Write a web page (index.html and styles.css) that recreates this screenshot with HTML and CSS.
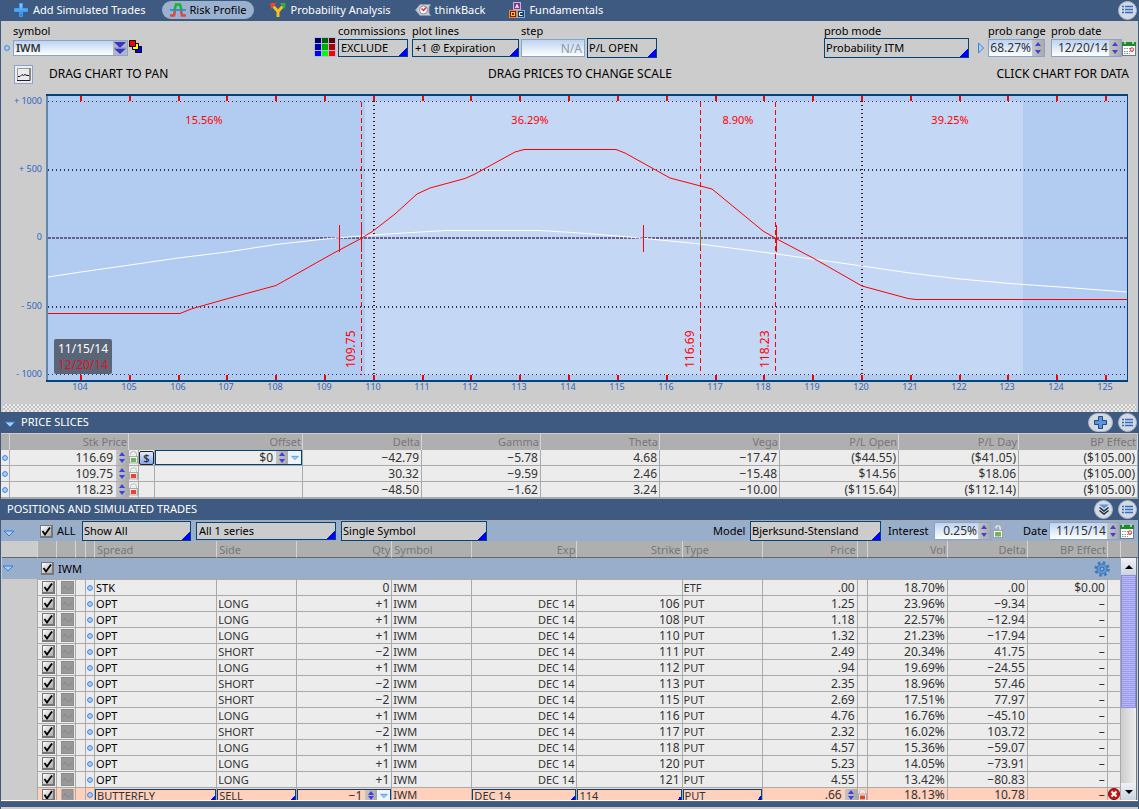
FILE: index.html
```html
<!DOCTYPE html>
<html lang="en">
<head>
<meta charset="utf-8">
<title>Risk Profile</title>
<link rel="stylesheet" href="styles.css">
</head>
<body>
<svg class="defs" aria-hidden="true">
  <defs>
    <linearGradient id="gBlue" x1="0" y1="0" x2="0" y2="1"><stop offset="0" stop-color="#8fd0ff"/><stop offset="1" stop-color="#1e7be0"/></linearGradient>
    <symbol id="i-list" viewBox="0 0 12 12"><path d="M0 2.500h2M0 5.500h2M0 8.500h2M3 2.500h8M3 5.500h8M3 8.500h8" stroke="#2f6fc4" stroke-width="1.4"/></symbol>
    <symbol id="i-plus" viewBox="0 0 16 16"><path d="M5.500 1.500h4v4h4v4h-4v4h-4v-4h-4v-4h4z" fill="#5b95dc" stroke="#1f4a80"/></symbol>
    <symbol id="i-chev" viewBox="0 0 12 12"><path d="M1 .5h10L6 4.500z" fill="#5b95dc"/><path d="M1.500 3.500 6 7l4.500-3.500M1.500 6.500 6 10l4.500-3.500" fill="none" stroke="#1a2a3a" stroke-width="1.4"/></symbol>
    <symbol id="i-down" viewBox="0 0 12 7"><path d="M1 1h10L6 6z" fill="#9fd0ff" stroke="#3a7bd0"/></symbol>
    <symbol id="i-up3" viewBox="0 0 6 4"><path d="M0 4 3 0l3 4z" fill="#4040e0"/></symbol>
    <symbol id="i-dn3" viewBox="0 0 6 4"><path d="M0 0 3 4l3-4z" fill="#4040e0"/></symbol>
    <symbol id="i-dot" viewBox="0 0 6 6"><circle cx="3" cy="3" r="2.400" fill="#a9d0ff" stroke="#3b82d8"/></symbol>
    <symbol id="i-lock" viewBox="0 0 10 13"><path d="M2.500 6V3.500a2.500 2.500 0 0 1 5 0V6" fill="none" stroke="#f4f4f4" stroke-width="2"/><path d="M1.700 6V3.500a3.300 3.300 0 0 1 6.600 0V6" fill="none" stroke="#9a9a9a" stroke-width=".6"/><rect x=".5" y="5.500" width="9" height="7" fill="#fff" stroke="#a0a0a0"/><rect x="2" y="7" width="6" height="4.500" fill="#e8452c"/></symbol>
    <symbol id="i-unlock" viewBox="0 0 10 13"><path d="M2.500 3.500V2.800a2.500 2.500 0 0 1 5 0V6" fill="none" stroke="#f4f4f4" stroke-width="2"/><path d="M1.700 3.700V3a3.300 3.300 0 0 1 6.600 0v3" fill="none" stroke="#8a8a8a" stroke-width=".7"/><rect x=".5" y="5.500" width="9" height="7" fill="#fff" stroke="#a0a0a0"/><rect x="2" y="7" width="6" height="4.500" fill="#6db65a"/></symbol>
    <symbol id="i-cal" viewBox="0 0 14 15"><rect x=".5" y="1.500" width="13" height="13" fill="#fff" stroke="#6d7c8c"/><path d="M0 1h14v4H0z" fill="#1f8a2c"/><path d="M3 0v3M11 0v3" stroke="#c8f0c8" stroke-width="1.400"/><path d="M2 7.500h8M2 10.500h9M2 12.500h6" stroke="#8a8f9a" stroke-dasharray="1.500 1"/><circle cx="10" cy="8.500" r="1.700" fill="#fff" stroke="#d82020"/></symbol>
    <symbol id="i-gear" viewBox="0 0 16 16"><circle cx="8" cy="8" r="6.300" fill="none" stroke="#3f78b8" stroke-width="2.800" stroke-dasharray="2.500 2.448"/><circle cx="8" cy="8" r="5" fill="#5f9ad6" stroke="#3f78b8"/><circle cx="8" cy="8" r="2" fill="#9ab0cd" stroke="#2f68aa"/></symbol>
    <symbol id="i-wave" viewBox="0 0 13 13"><rect x=".5" y=".5" width="12" height="12" fill="#999" stroke="#8c8c8c"/><path d="M2 8l2-3 2 3 1 1 2-1 2-3" fill="none" stroke="#858585"/></symbol>
    <symbol id="i-close" viewBox="0 0 12 12"><circle cx="6" cy="6" r="5.500" fill="#c81818" stroke="#7c0c0c"/><path d="M3.500 3.500l5 5m0-5-5 5" stroke="#fff" stroke-width="2"/></symbol>
  </defs>
</svg>

<div class="app">
  <nav class="tabs">
    <a href="#add" class="tab"><svg width="16" height="16" viewBox="0 0 16 16"><path d="M6.500 1.500h3v5h5v3h-5v5h-3v-5h-5v-3h5z" fill="url(#gBlue)" stroke="#3aa0f5"/></svg>Add Simulated Trades</a>
    <a href="#risk" class="tab tab-on"><svg width="16" height="16" viewBox="0 0 16 16"><path d="M4.500 8 6 2.500h4L11.500 8" fill="none" stroke="#18b818" stroke-width="2.500"/><path d="M0 13.500h4l1-5M16 13.500h-4l-1-5" fill="none" stroke="#e04838" stroke-width="2.500"/><path d="M0 8h16" stroke="#2588e0" stroke-width="1.600"/></svg>Risk Profile</a>
    <a href="#prob" class="tab"><svg width="16" height="16" viewBox="0 0 16 16"><path d="M8 15V9.500L3.500 4.500M8 9.500 12.500 4.500" fill="none" stroke="#f5c21c" stroke-width="3"/><path d="M.5 1h6l-5.500 6z" fill="#f04a20"/><path d="M15.500 1h-6L15 7z" fill="#25b83c"/></svg>Probability Analysis</a>
    <a href="#back" class="tab"><svg width="16" height="16" viewBox="0 0 16 16"><path d="M.5 8 5 2.500h10.500l-1.500 3v5l1.500 3H5z" fill="#c9ced6" stroke="#8c96a4"/><circle cx="8.500" cy="8" r="4" fill="#f8fbff" stroke="#7c8fa8"/><path d="M6.500 6.500 8.500 8.500l2.500-3" fill="none" stroke="#e02020" stroke-width="1.300"/></svg>thinkBack</a>
    <a href="#fund" class="tab"><svg width="16" height="16" viewBox="0 0 16 16"><rect x="4.500" y=".5" width="7" height="7" fill="#7b3a86" stroke="#d9a8e0"/><path d="M6.500 6 8 2.500 9.500 6M7 5h2" fill="none" stroke="#fff"/><rect x=".5" y="8.500" width="7" height="7" fill="#7a1c10" stroke="#f08830"/><rect x="2.500" y="10.500" width="3" height="3" fill="none" stroke="#ffc030"/><rect x="8.500" y="8.500" width="7" height="7" fill="#1c3c60" stroke="#7ab0e8"/><path d="M13.500 10.500h-3v3h3" fill="none" stroke="#fff"/></svg>Fundamentals</a>
    <button class="round end" aria-label="Menu"><svg width="12" height="12"><use href="#i-list"/></svg></button>
  </nav>

  <section class="tools">
    <div class="controls">
      <svg class="lead" width="6" height="6"><use href="#i-dot"/></svg>
      <div class="field symbol"><label for="sym">symbol</label>
        <div class="combo"><input id="sym" type="text" value="IWM"><button aria-label="Choose symbol"><svg width="14" height="14" viewBox="0 0 14 14"><path d="M1 1h12L7 7zM1 7.500h12L7 13z" fill="#3434c8"/><path d="M1 7h12" stroke="#8a96b8"/></svg></button></div>
      </div>
      <button class="plain" aria-label="Link color"><svg width="14" height="14" viewBox="0 0 14 14"><path d="M6.500 6.500h6v6h-6z" fill="#00f" stroke="#000"/><path d="M3.500 3.500h6v6h-6z" fill="#ff0" stroke="#000"/><path d="M.5.5h6v6h-6z" fill="#f00" stroke="#000"/></svg></button>
      <button class="plain palette" aria-label="Palette"><svg width="22" height="20" viewBox="0 0 22 20" shape-rendering="crispEdges"><path fill="#a9c0e4" d="M0 0h22v20H0z"/><path fill="#000060" d="M1 1h6v5H1z"/><path fill="#006000" d="M8 1h6v5H8z"/><path fill="#600000" d="M15 1h6v5h-6z"/><path fill="#0000b0" d="M1 7h6v6H1z"/><path fill="#00b000" d="M8 7h6v6H8z"/><path fill="#b00000" d="M15 7h6v6h-6z"/><path fill="#00f" d="M1 14h6v5H1z"/><path fill="#0f0" d="M8 14h6v5H8z"/><path fill="red" d="M15 14h6v5h-6z"/></svg></button>
      <div class="field w70"><label for="comm">commissions</label><select id="comm" class="pick"><option>EXCLUDE</option></select></div>
      <div class="field w107 gap4"><label for="plot">plot lines</label><select id="plot" class="pick"><option>+1 @ Expiration</option></select></div>
      <div class="field w64 gap2"><label for="step">step</label><input id="step" class="box dim" type="text" value="N/A" disabled></div>
      <div class="field w70 gap2"><select class="pick tall" aria-label="Plot value"><option>P/L OPEN</option></select></div>
      <div class="field w145 push"><label for="mode">prob mode</label><select id="mode" class="pick tall"><option>Probability ITM</option></select></div>
      <button class="plain arrow" aria-label="Previous"><svg width="6" height="12" viewBox="0 0 6 12"><path d="M.5 1v10L5.500 6z" fill="#a9d0ff" stroke="#3b82d8"/></svg></button>
      <div class="field w57"><label for="range">prob range</label><div class="box spinbox"><input id="range" type="text" value="68.27%"><span class="spin"></span></div></div>
      <div class="field w71 gap6"><label for="pdate">prob date</label><div class="box spinbox"><input id="pdate" type="text" value="12/20/14"><span class="spin"></span></div></div>
      <button class="plain cal" aria-label="Calendar"><svg width="14" height="15"><use href="#i-cal"/></svg></button>
    </div>
    <div class="captions">
      <button class="chartbtn" aria-label="Chart style"><svg width="15" height="15" viewBox="0 0 15 15"><path d="M1 13.500h13V1" fill="none" stroke="#222"/><path d="M1.500 13V1.500H13" fill="none" stroke="#999"/><path d="M2 9.500h2l2-2 1.500 1L9 7.500l2 1h2" fill="none" stroke="#111"/></svg></button>
      <span class="cap">DRAG CHART TO PAN</span><span class="cap mid">DRAG PRICES TO CHANGE SCALE</span><span class="cap last">CLICK CHART FOR DATA</span>
    </div>
    <svg class="chart" id="chart" viewBox="1 92 1137 312" role="img" aria-label="Risk profile chart">
      <rect x="47" y="95" width="1080" height="286" fill="#b2ccf1"/>
      <rect x="365" y="101" width="658" height="274" fill="#c4d7f5"/>
      <g class="grid">
        <path d="M48 101.500H1127M48 374.500H1127" stroke="#303060" stroke-dasharray="1 3"/>
        <path d="M48 170H1127M48 307H1127" stroke="#303060" stroke-width="2" stroke-dasharray="1 3"/>
        <path d="M374 101V380M862 101V380" stroke="#402020" stroke-width="2" stroke-dasharray="1 3"/>
        <path d="M48 238H1127" stroke="#66608f" stroke-width="2" stroke-dasharray="3 1"/>
      </g>
      <polyline fill="none" stroke="#fff" points="48,277 81,272 130,265 178,258 227,252 276,244.500 325,239 361,236 395,233.500 446,230.500 540,230.500 580,233 635,237.500 700,244 777,254 862,266 910,273 960,279 1010,283.500 1060,287 1127,292"/>
      <polyline fill="none" stroke="#f00" points="48,313.500 180,313.500 191,309 228,298.500 276,285.500 332,254 361,238.500 373,231 395,214 417,194 430,188 465,178.500 475,174 515,152 524,149.500 616,149.500 625,153 670,178 712,189 763,231 776,238.500 813,258 862,286 908,298.500 916,299.500 1127,299.500"/>
      <path d="M361.500 102V375M700.500 102V375M775.500 102V375" stroke="#f00" stroke-dasharray="5 3"/>
      <path d="M339.500 225V252M361.500 225V252M643.500 225V252M776.500 225V252" stroke="#f00"/>
      <path d="M700.500 230V247" stroke="#8a7020"/>
      <g id="ticks"></g>
      <path d="M47 95V382" stroke="#00447c"/><path d="M46 95H1128" stroke="#00447c" stroke-width="2"/><path d="M46 381H1128" stroke="#00447c" stroke-width="2"/><path d="M1127.500 95V382" stroke="#00447c"/>
      <g class="pct"><text x="204" y="124">15.56%</text><text x="530" y="124">36.29%</text><text x="738" y="124">8.90%</text><text x="950" y="124">39.25%</text></g>
      <g class="vert"><text transform="translate(355 368) rotate(-90)">109.75</text><text transform="translate(694 368) rotate(-90)">116.69</text><text transform="translate(769 368) rotate(-90)">118.23</text></g>
      <g class="axis yax"><text x="42" y="104">+ 1000</text><text x="42" y="172">+ 500</text><text x="42" y="240">0</text><text x="42" y="309">- 500</text><text x="42" y="377">- 1000</text></g>
      <rect x="54" y="339" width="58" height="35" rx="2" fill="#5a6677"/>
      <g class="dates"><text x="83" y="353" fill="#fff">11/15/14</text><text x="83" y="369" fill="#e01020">12/20/14</text></g>
    </svg>
    <div class="grip"></div>
  </section>

  <header class="bar"><button class="plain fold" aria-label="Collapse"><svg width="12" height="7"><use href="#i-down"/></svg></button><h2>PRICE SLICES</h2>
    <button class="round wide end" aria-label="Add slice"><svg width="16" height="16"><use href="#i-plus"/></svg></button><button class="round" aria-label="Menu"><svg width="12" height="12"><use href="#i-list"/></svg></button></header>
  <table class="slices">
    <colgroup><col class="c9"><col class="c119"><col class="c10"><col class="c16"><col class="c148"><col class="c119"><col class="c119"><col class="c119"><col class="c120"><col class="c119"><col class="c120"><col class="c119"></colgroup>
    <thead><tr><th></th><th>Stk Price</th><th colspan="3">Offset</th><th>Delta</th><th>Gamma</th><th>Theta</th><th>Vega</th><th>P/L Open</th><th>P/L Day</th><th>BP Effect</th></tr></thead>
    <tbody id="slices"></tbody>
  </table>

  <header class="bar second"><h2>POSITIONS AND SIMULATED TRADES</h2>
    <button class="round end" aria-label="Expand all"><svg width="12" height="12"><use href="#i-chev"/></svg></button><button class="round" aria-label="Menu"><svg width="12" height="12"><use href="#i-list"/></svg></button></header>
  <div class="filters">
    <button class="plain fold" aria-label="Collapse"><svg width="12" height="7"><use href="#i-down"/></svg></button>
    <label class="all"><input type="checkbox" checked>ALL</label>
    <select class="pick tall f109" aria-label="Show"><option>Show All</option></select>
    <select class="pick f140" aria-label="Series"><option>All 1 series</option></select>
    <select class="pick tall f146" aria-label="Grouping"><option>Single Symbol</option></select>
    <label class="end" for="model">Model</label><select id="model" class="pick tall f131"><option>Bjerksund-Stensland</option></select>
    <label class="lint" for="int">Interest</label><div class="box spinbox f57"><input id="int" type="text" value="0.25%"><span class="spin"></span></div>
    <button class="plain ulk" aria-label="Unlock"><svg width="10" height="13"><use href="#i-unlock"/></svg></button>
    <label class="ldate" for="date">Date</label><div class="box spinbox f71"><input id="date" type="text" value="11/15/14"><span class="spin"></span></div>
    <button class="plain cal" aria-label="Calendar"><svg width="14" height="15"><use href="#i-cal"/></svg></button>
  </div>
  <div class="positions">
    <div class="scrollpane">
      <table class="trades">
        <colgroup><col class="t36"><col class="t19"><col class="t19"><col class="t10"><col class="t9"><col class="t122"><col class="t80"><col class="t95"><col class="t80"><col class="t105"><col class="t105"><col class="t80"><col class="t95"><col class="t10"><col class="t80"><col class="t80"><col class="t80"><col class="t13"></colgroup>
        <thead><tr><th class="blank"></th><th></th><th></th><th></th><th></th><th class="l">Spread</th><th class="l">Side</th><th>Qty</th><th class="l">Symbol</th><th>Exp</th><th>Strike</th><th class="l">Type</th><th>Price</th><th></th><th>Vol</th><th>Delta</th><th>BP Effect</th><th></th></tr></thead>
        <tbody id="trades">
          <tr class="group"><td><svg width="12" height="7"><use href="#i-down"/></svg></td><td colspan="15"><label><input type="checkbox" checked>IWM</label></td><td colspan="2"><svg class="gear" width="16" height="16"><use href="#i-gear"/></svg></td></tr>
        </tbody>
      </table>
    </div>
    <div class="side"><div class="sidehead"></div>
      <div class="scroll"><button aria-label="Scroll up"><svg width="8" height="4" viewBox="0 0 8 4"><path d="M0 4 4 0l4 4z"/></svg></button><div class="track"><div class="thumb"></div></div><button aria-label="Scroll down"><svg width="8" height="4" viewBox="0 0 8 4"><path d="M0 0l4 4 4-4z"/></svg></button></div>
    </div>
  </div>
  <div class="foot"></div>
</div>
<script src="script.js"></script>
</body>
</html>
```

FILE: styles.css
```css
* { box-sizing: border-box; }
body { margin: 0; background: #ccc; color: #000; font: 11px/14px "Noto Sans", "Open Sans", sans-serif; }
button, input, select { font: inherit; color: inherit; margin: 0; }
button { padding: 0; border: 0; background: none; }
svg { display: block; }
h2 { margin: 0; padding-bottom: 1px; font-size: 11px; font-weight: 400; }
.defs { position: absolute; width: 0; height: 0; }
.app { height: 100vh; display: flex; flex-direction: column; border: solid #3e5a80; border-width: 0 1px; }
.app > * { flex: none; }
.end { margin-left: auto; }
.plain { flex: none; }

.tabs { display: flex; align-items: center; height: 21px; padding: 0 1px 1px 4px; background: #3e5a80; }
.tab { display: flex; align-items: center; gap: 4px; height: 18px; padding: 0 8px; margin-right: 8px; border-radius: 10px; color: #fff; text-decoration: none; }
.tab-on { background: #9ab1d0; color: #000; }
.round { display: flex; align-items: center; justify-content: center; width: 19px; height: 19px; border-radius: 10px; background: #d4d9e2; border: 1px solid #a9b8cc; flex: none; }
.wide { width: 25px; }
.bar .round { margin-left: 5px; }
.bar .round.end { margin-left: auto; }

.controls { display: flex; align-items: flex-end; height: 37px; padding: 0 2px 0 3px; }
.controls .lead { margin: 0 3px 7px 0; }
.field { display: flex; flex-direction: column; justify-content: flex-end; height: 37px; flex: none; }
.field label { white-space: nowrap; line-height: 14px; margin-bottom: auto; padding-top: 3px; }
.controls .plain { margin-bottom: 4px; }
.controls .palette { margin: 0 2px 1px 171px; }
.controls .arrow { margin: 0 4px 4px 9px; }
.controls .cal { margin-bottom: 2px; }
.push { margin-left: auto; }
.gap4 { margin-left: 4px; }
.gap2 { margin-left: 2px; }
.gap6 { margin-left: 6px; }
.symbol { width: 115px; margin-right: 1px; }
.w57 { width: 57px; }
.w64 { width: 64px; }
.w70 { width: 70px; }
.w71 { width: 71px; }
.w107 { width: 107px; }
.w145 { width: 145px; }
.pick { appearance: none; width: 100%; height: 18px; padding: 0 2px; border: 1px solid #00447c; border-radius: 0; background: linear-gradient(135deg, transparent 50%, #00f 50%) right bottom / 8px 8px no-repeat #ccc; }
.tall { height: 20px; padding: 0 1px; }
.field > * + .pick:not(.tall), .field > .box { margin-bottom: 1px; }
.box, .combo { display: flex; width: 100%; height: 18px; border: 1px solid #86a4cc; background: linear-gradient(#bdd3f0, #fff); }
.combo { height: 16px; margin-bottom: 2px; }
.combo input { font-weight: 600; color: #333; }
.combo button { background: #b4b4c4; }
.combo input, .spinbox input { flex: 1; min-width: 0; border: 0; padding: 0 2px; background: none; }
.spinbox input { padding: 0; text-align: right; font-size: 12px; color: #333; }
input.box { text-align: right; padding: 0 2px; font-size: 12px; }
.dim { color: #8b98aa; }
.spin { display: flex; flex-direction: column; flex: none; width: 12px; margin-left: 1px; background: linear-gradient(90deg, #c4c4c4, #aaa); }
.spin button { flex: 1; min-height: 0; display: flex; align-items: center; justify-content: center; }

.captions { display: grid; grid-template-columns: 1fr auto 1fr; align-items: center; height: 34px; padding: 0 9px 2px 13px; font-size: 12px; }
.chartbtn { width: 19px; height: 19px; padding: 1px; background: #ececec; border: 1px solid #86a4cc; grid-area: 1 / 1; }
.captions .cap { grid-area: 1 / 1; margin-left: 35px; }
.captions .mid { grid-area: 1 / 2; margin: 0 0 0 17px; }
.captions .last { grid-area: 1 / 3; margin: 0; text-align: right; }
.chart { width: 100%; height: auto; }
.chart text { font-family: "Noto Sans", sans-serif; }
.pct text { font-size: 11px; text-anchor: middle; fill: #f00; }
.vert text { font-size: 12px; fill: #f00; }
.axis text { font-size: 9px; fill: #2b68c4; }
.yax text { text-anchor: end; }
.xax { text-anchor: middle; }
.dates text { font-size: 12px; text-anchor: middle; }
.grip { height: 8px; margin: 0 2px; background: conic-gradient(#fff 25%, #bbb 0 50%, #fff 0 75%, #bbb 0) 0 0 / 4px 4px; opacity: .6; }

.bar { display: flex; align-items: center; height: 21px; padding: 0 1px 0 6px; background: #3e5a80; color: #fff; }
.fold { width: 18px; padding-top: 4px; }
.bar .fold { width: 14px; margin-left: -3px; margin-right: 3px; }
.second { height: 22px; border-top: 1px solid #aaa; }
table { border-collapse: separate; border-spacing: 0; table-layout: fixed; width: 100%; }
th, td { height: 16px; padding: 0 2px 0 0; line-height: 14px; text-align: right; white-space: nowrap; overflow: hidden; vertical-align: middle; }
th { background: #afafaf; color: #777; font-weight: 400; font-size: 11px; border-right: 1px solid #d4d4d4; padding-right: 1px; }
td { background: #ececec; color: #333; border-right: 1px solid #aaa; font-size: 12px; }
.slices td { border-bottom: 1px solid #aaa; }
.slices th { height: 17px; border-top: 1px solid #ccc; }
.c9 { width: 9px; }
.c10 { width: 10px; }
.c16 { width: 16px; }
.c119 { width: 119px; }
.c120 { width: 120px; }
.c148 { width: 148px; }
td.icon { padding: 0; }
td.icon svg { margin: auto; }
.cell { display: flex; align-items: center; justify-content: flex-end; height: 15px; }
.cell .num { margin-right: 2px; }
.slices td.edit, .slices td.price { padding: 0; }
.edit .cell { border: 1px solid #00447c; }
.cell .spin { height: 100%; }
.cell .drop { width: 13px; height: 100%; display: flex; align-items: center; justify-content: center; background: #eef4fc; }
.dollar { width: 15px; height: 14px; border: 1px solid #222; border-radius: 2px; background: linear-gradient(#e4ecff, #86a8f0); line-height: 11px; font-size: 11px; font-weight: 600; display: block; }

.filters { display: flex; align-items: center; height: 21px; padding: 0 4px 0 2px; background: #99aecb; border-top: 1px solid #aaa; }
.filters .fold { width: 37px; }
.filters .pick { margin-right: 5px; }
.all { display: flex; align-items: center; gap: 4px; width: 42px; flex: none; }
.f109 { width: 109px; }
.f140 { width: 140px; }
.f146 { width: 146px; }
.f131 { width: 131px; }
.f57 { width: 57px; }
.f71 { width: 71px; }
.filters > select, .filters > .box, .filters > label { flex: none; }
.filters label[for="model"] { width: 37px; margin-left: auto; }
.lint { width: 46px; margin-left: 2px; }
.ldate { width: 26px; }
.ulk { width: 32px; padding-left: 2px; }
input[type="checkbox"] { appearance: none; width: 13px; height: 13px; border: 2px solid #777; border-width: 1px 2px 2px 1px; flex: none; background: url("data:image/svg+xml,%3Csvg xmlns='http://www.w3.org/2000/svg' viewBox='0 0 10 10'%3E%3Cpath d='M1.500 5 4 8.500 9 1.500' fill='none' stroke='black' stroke-width='1.800'/%3E%3C/svg%3E") center / 10px no-repeat, linear-gradient(135deg, #fff, #aaa); }

.app > .positions { flex: 1; min-height: 0; display: flex; border-bottom: 1px solid #fff; padding-left: 1px; }
.scrollpane { flex: 1; min-width: 0; overflow: hidden; }
.trades td { border: solid #aaa; border-width: 1px 1px 0 0; }
.trades th { height: 17px; padding-top: 1px; border-bottom: 1px solid #666; }
.trades .l { text-align: left; padding-left: 1px; }
.trades th.l { padding-left: 2px; }
.trades td:nth-child(6) { color: #000; }
.trades td.blank, .trades th.blank { background: #ccc; }
.trades td.blank { border-top: 0; }
.trades td input { display: block; margin: auto; }
.trades td.tick { padding-left: 2px; }
.trades .pad { font-size: 11px; }
.trades .group td { height: 21px; background: #99aecb; border: 0; text-align: left; color: #000; }
.trades .group label { display: flex; align-items: center; gap: 4px; padding-left: 3px; font-size: 11px; }
.trades .group input { margin: 0; }
.gear { margin: 0 9px 0 auto; }
.trades .sim td { height: 13px; line-height: 12px; padding-top: 0; }
.trades .sim td:not(.blank) { background: #ffd0bb; }
.trades .sim td.p { padding: 0; }
.sim .cell { height: 12px; }
.sim .edit .cell, .trades .sim .pick { border-bottom: 0; }
.trades .sim .pick { display: block; height: 12px; line-height: 11px; margin: 0; padding: 0 1px; background-color: #ffd0bb; background-size: 5px 5px; font-size: 11px; color: #333; }
.sim input, .sim svg { margin-bottom: 0; max-height: 12px; }
.t9 { width: 9px; }
.t10 { width: 10px; }
.t13 { width: 13px; }
.t19 { width: 19px; }
.t36 { width: 36px; }
.t80 { width: 80px; }
.t95 { width: 95px; }
.t105 { width: 105px; }
.t122 { width: 122px; }
.side { width: 17px; display: flex; flex-direction: column; flex: none; padding-right: 1px; }
.sidehead { height: 17px; margin-right: -1px; background: #afafaf; border-bottom: 1px solid #666; }
.scroll { flex: 1; display: flex; flex-direction: column; border-right: 1px solid #777; background: #ddd; }
.scroll button { height: 17px; display: flex; align-items: center; justify-content: center; background: linear-gradient(#eef2f8, #ccd4de); }
.track { flex: 1; background: linear-gradient(90deg, #ccc, #eee); }
.thumb { height: 64%; border: 1px solid #8c8cd8; background: repeating-linear-gradient(#b8b8ff 0 1px, #9a9ae8 1px 2px); }
.foot { height: 8px; background: #3e5a80; border-top: 1px solid #666; border-bottom: 2px solid #ccc; }
```

FILE: script.js
```js
const icon = (id, w, h) => `<svg width="${w}" height="${h}"><use href="#i-${id}"/></svg>`;
const arrows = `<button aria-label="Up">${icon('up3', 6, 4)}</button><button aria-label="Down">${icon('dn3', 6, 4)}</button>`;
const spin = `<span class="spin">${arrows}</span>`;
document.querySelectorAll('.spin').forEach(s => { s.innerHTML = arrows; });

// Price axis: one tick per dollar
let ticks = '';
let labels = '';
for (let p = 104; p <= 125; p++) {
  const x = Math.round(81 + (p - 104) * 48.81);
  ticks += `M${x} 96v5M${x} 375v5`;
  labels += `<text x="${x - 1}" y="390">${p}</text>`;
}
document.getElementById('ticks').innerHTML =
  `<path d="${ticks}" stroke="#f00" stroke-width="2"/><g class="axis xax">${labels}</g>`;

const slices = [
  ['116.69', '−42.79', '−5.78', '4.68', '−17.47', '($44.55)', '($41.05)', '($105.00)'],
  ['109.75', '30.32', '−9.59', '2.46', '−15.48', '$14.56', '$18.06', '($105.00)'],
  ['118.23', '−48.50', '−1.62', '3.24', '−10.00', '($115.64)', '($112.14)', '($105.00)']
];
document.getElementById('slices').innerHTML = slices.map(([price, ...rest], i) => `<tr>
  <td class="icon">${icon('dot', 6, 6)}</td>
  <td class="price"><div class="cell"><span class="num">${price}</span>${spin}</div></td>
  <td class="icon">${icon(i ? 'lock' : 'unlock', 9, 13)}</td>
  <td class="icon">${i ? '' : '<button class="dollar">$</button>'}</td>
  <td class="edit">${i ? '' : `<div class="cell"><span class="num">$0</span>${spin}<button class="drop" aria-label="Offset menu">${icon('down', 8, 6)}</button></div>`}</td>
  ${rest.map(v => `<td>${v}</td>`).join('')}</tr>`).join('');

const trades = [
  ['STK', '', '0', '', '', 'ETF', '.00', '18.70%', '.00', '$0.00'],
  ['OPT', 'LONG', '+1', 'DEC 14', '106', 'PUT', '1.25', '23.96%', '−9.34', '–'],
  ['OPT', 'LONG', '+1', 'DEC 14', '108', 'PUT', '1.18', '22.57%', '−12.94', '–'],
  ['OPT', 'LONG', '+1', 'DEC 14', '110', 'PUT', '1.32', '21.23%', '−17.94', '–'],
  ['OPT', 'SHORT', '−2', 'DEC 14', '111', 'PUT', '2.49', '20.34%', '41.75', '–'],
  ['OPT', 'LONG', '+1', 'DEC 14', '112', 'PUT', '.94', '19.69%', '−24.55', '–'],
  ['OPT', 'SHORT', '−2', 'DEC 14', '113', 'PUT', '2.35', '18.96%', '57.46', '–'],
  ['OPT', 'SHORT', '−2', 'DEC 14', '115', 'PUT', '2.69', '17.51%', '77.97', '–'],
  ['OPT', 'LONG', '+1', 'DEC 14', '116', 'PUT', '4.76', '16.76%', '−45.10', '–'],
  ['OPT', 'SHORT', '−2', 'DEC 14', '117', 'PUT', '2.32', '16.02%', '103.72', '–'],
  ['OPT', 'LONG', '+1', 'DEC 14', '118', 'PUT', '4.57', '15.36%', '−59.07', '–'],
  ['OPT', 'LONG', '+1', 'DEC 14', '120', 'PUT', '5.23', '14.05%', '−73.91', '–'],
  ['OPT', 'LONG', '+1', 'DEC 14', '121', 'PUT', '4.55', '13.42%', '−80.83', '–']
];
const lead = `<td class="blank"></td><td class="icon tick"><input type="checkbox" checked aria-label="Include"></td>
  <td class="icon tick">${icon('wave', 13, 13)}</td><td></td><td class="icon">${icon('dot', 6, 6)}</td>`;
const pick = (v, name) => `<td class="p"><select class="pick" aria-label="${name}"><option>${v}</option></select></td>`;
const rows = trades.map(([spread, side, qty, exp, strike, type, price, vol, delta, bp]) => `<tr>${lead}
  <td class="l pad">${spread}</td><td class="l pad">${side}</td><td>${qty}</td><td class="l pad">IWM</td>
  <td class="pad">${exp}</td><td>${strike}</td><td class="l pad">${type}</td><td>${price}</td><td></td>
  <td>${vol}</td><td>${delta}</td><td>${bp}</td><td></td></tr>`).join('');
const sim = `<tr class="sim">${lead}${pick('BUTTERFLY', 'Spread')}${pick('SELL', 'Side')}
  <td class="p edit"><div class="cell"><span class="num">−1</span>${spin}<button class="drop" aria-label="Quantity menu">${icon('down', 8, 6)}</button></div></td>
  <td class="l pad">IWM</td>${pick('DEC 14', 'Expiration')}${pick('114', 'Strike')}${pick('PUT', 'Type')}
  <td class="p"><div class="cell"><span class="num">.66</span>${spin}</div></td>
  <td class="icon">${icon('lock', 9, 13)}</td><td>18.13%</td><td>10.78</td><td>–</td>
  <td class="icon"><button aria-label="Remove">${icon('close', 12, 12)}</button></td></tr>`;
document.getElementById('trades').insertAdjacentHTML('beforeend', rows + sim);
```
